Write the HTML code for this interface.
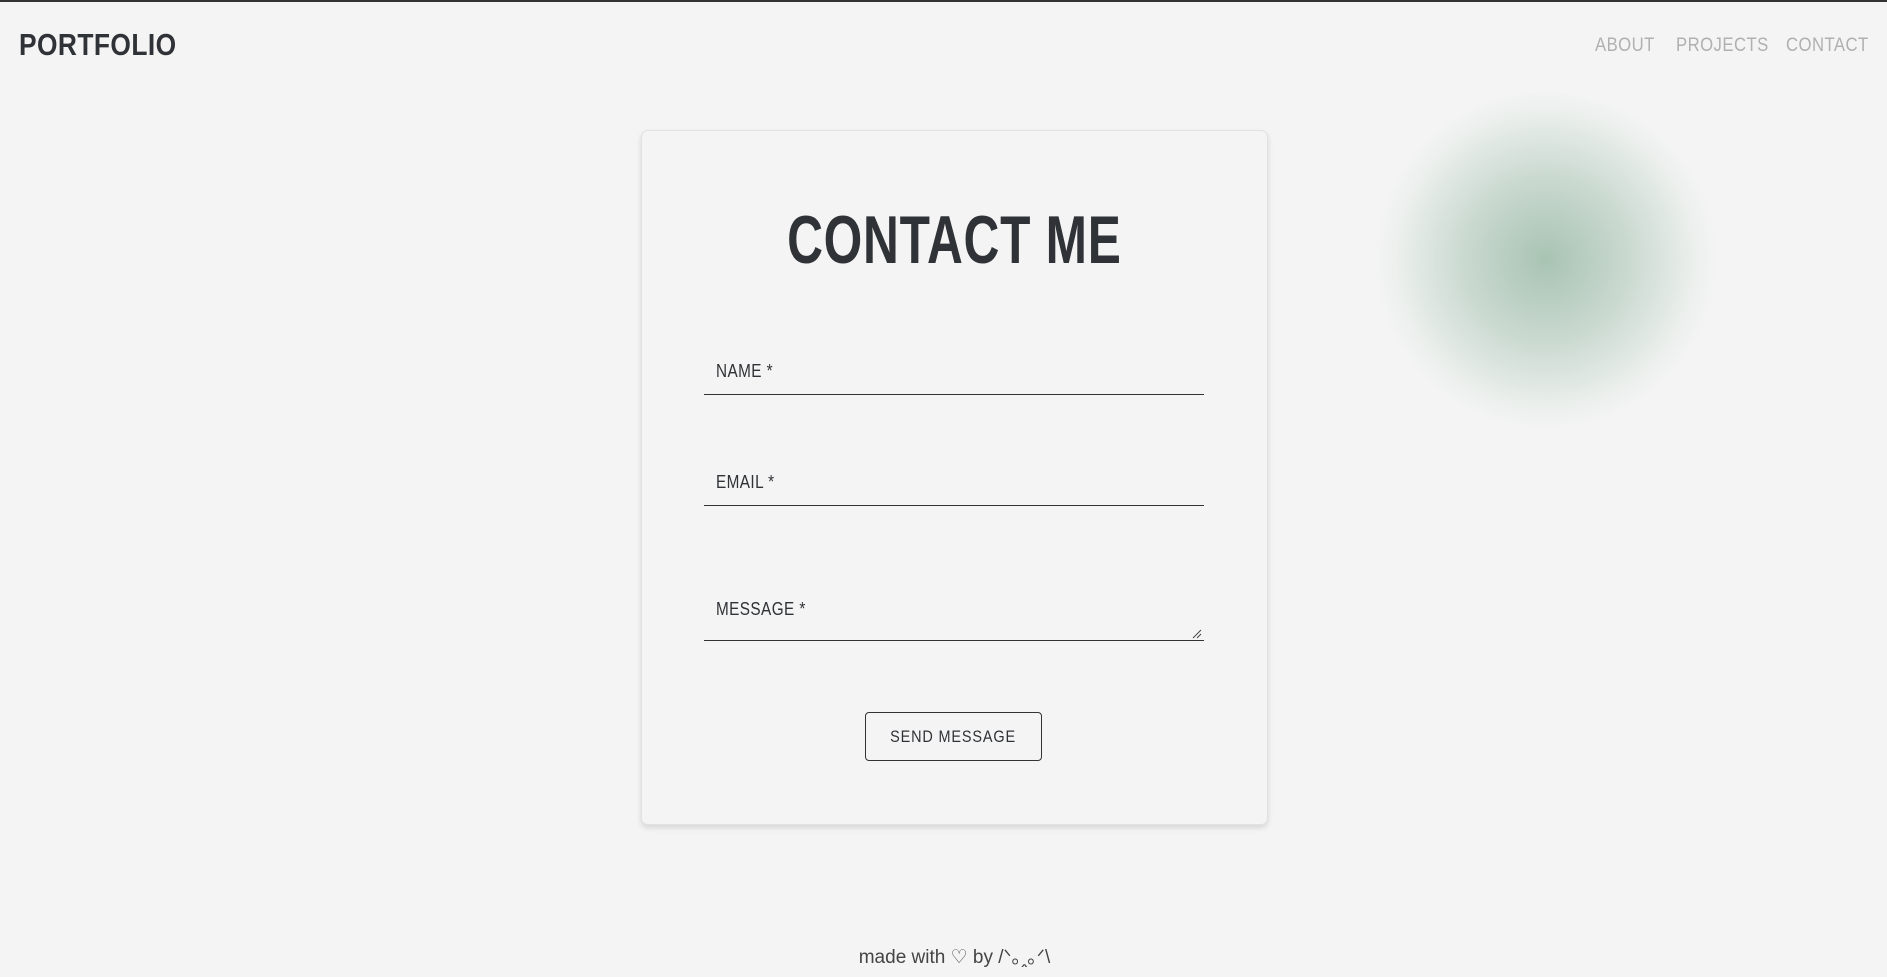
<!DOCTYPE html>
<html><head><meta charset="utf-8"><style>
html,body{margin:0;padding:0;width:1887px;height:977px;overflow:hidden;background:#f4f4f4;font-family:"Liberation Sans",sans-serif;color:#2f3236}
.top{position:absolute;left:0;top:0;width:1887px;height:2px;background:#333}
.logo{position:absolute;left:19px;top:27px;font-size:31px;font-weight:bold;letter-spacing:0.5px;transform:scaleX(0.85);transform-origin:0 0}
.nav{position:absolute;top:35px;font-size:19px;color:#b0b0b0;letter-spacing:0.5px;transform:scaleX(0.88);transform-origin:0 0}
.blob{position:absolute;left:1376px;top:92px;width:340px;height:335px;border-radius:50%;background:radial-gradient(circle,rgba(160,190,172,0.9) 0%,rgba(175,200,185,0.6) 35%,rgba(215,228,220,0.3) 62%,rgba(244,244,244,0) 72%)}
.card{position:absolute;left:641px;top:130px;width:625px;height:693px;border:1px solid #e2e2e2;border-radius:7px;box-shadow:0 3px 6px rgba(0,0,0,0.12);background:#f4f4f4}
h1{position:absolute;left:8px;width:100%;top:206px;margin:0;text-align:center;font-size:68px;font-weight:bold;letter-spacing:1px;line-height:1;transform:scaleX(0.73);transform-origin:954px 0}
.lab{position:absolute;left:716px;font-size:18px;letter-spacing:0.5px;color:#2f3236;transform:scaleX(0.85);transform-origin:0 0}
.line{position:absolute;left:704px;width:500px;height:1px;background:#333}
.btn{position:absolute;left:865px;top:712px;width:177px;height:49px;border:1px solid #333;border-radius:4px;box-sizing:border-box;text-align:center;line-height:47px;font-size:17px;letter-spacing:1px}
.btn span{display:inline-block;transform:scaleX(0.85)}
.foot{position:absolute;left:11px;width:1887px;text-align:center;top:942px;font-size:19px;color:#444}
</style></head><body>
<div class="top"></div>
<div class="logo">PORTFOLIO</div>
<div class="nav" style="left:1595px">ABOUT</div>
<div class="nav" style="left:1676px">PROJECTS</div>
<div class="nav" style="left:1786px">CONTACT</div>
<div class="blob"></div>
<div class="card"></div>
<h1>CONTACT ME</h1>
<div class="lab" style="top:361px">NAME *</div>
<div class="line" style="top:394px"></div>
<div class="lab" style="top:472px">EMAIL *</div>
<div class="line" style="top:505px"></div>
<div class="lab" style="top:599px">MESSAGE *</div>
<div class="line" style="top:640px"></div>
<svg style="position:absolute;left:1192px;top:629px" width="10" height="10"><path d="M1 9L9 1M5 9L9 5" stroke="#444" stroke-width="1"/></svg>
<div class="btn"><span>SEND MESSAGE</span></div>
<div class="foot">made with ♡ by /ᐠ｡ꞈ｡ᐟ\</div>
</body></html>
